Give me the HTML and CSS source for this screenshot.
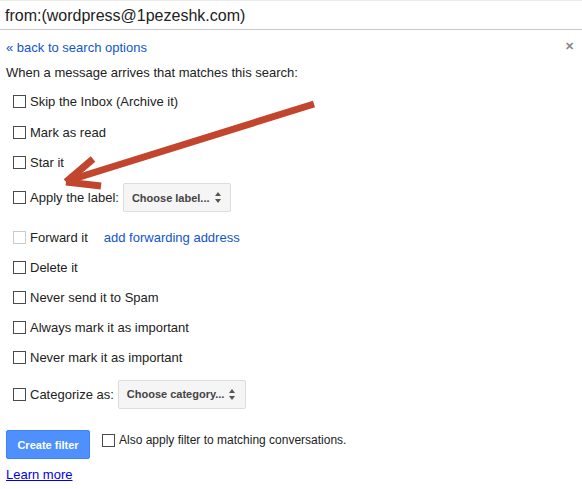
FILE: index.html
```html
<!DOCTYPE html>
<html lang="en">
<head>
  <meta charset="UTF-8" />
  <title>Create filter</title>
  <link rel="stylesheet" href="styles.css">
</head>
<body>

  <div class="search-bar">from:(wordpress@1pezeshk.com)</div>

  <section class="filter-panel">
    <div class="panel-top">
      <a href="#" class="back-link">&laquo; back to search options</a>
      <span class="close">&#x2715;</span>
    </div>

    <p class="intro">When a message arrives that matches this search:</p>

    <div class="options">
      <label class="row"><span class="box"></span>Skip the Inbox (Archive it)</label>
      <label class="row row-read"><span class="box"></span>Mark as read</label>
      <label class="row"><span class="box"></span>Star it</label>
      <label class="row row-select">
        <span class="box"></span>Apply the label:
        <span class="select select-label">Choose label...<span class="updown"></span></span>
      </label>
      <label class="row row-forward">
        <span class="box box-disabled"></span>Forward it
        <a href="#" class="forward-link">add forwarding address</a>
      </label>
      <label class="row"><span class="box"></span>Delete it</label>
      <label class="row"><span class="box"></span>Never send it to Spam</label>
      <label class="row"><span class="box"></span>Always mark it as important</label>
      <label class="row"><span class="box"></span>Never mark it as important</label>
      <label class="row row-cat">
        <span class="box"></span>Categorize as:
        <span class="select select-cat">Choose category...<span class="updown"></span></span>
      </label>
    </div>

    <div class="actions">
      <button class="create-btn">Create filter</button>
      <label class="also"><span class="box"></span>Also apply filter to matching conversations.</label>
    </div>

    <a href="#" class="learn-more">Learn more</a>

    <svg class="arrow" width="582" height="489" viewBox="0 0 582 489">
      <g stroke="#c2452d" stroke-width="7" stroke-linecap="butt" fill="none">
        <line x1="314" y1="104" x2="70" y2="180" />
        <line x1="66" y1="182" x2="93" y2="159" />
        <line x1="66" y1="182" x2="101" y2="186" />
      </g>
    </svg>
  </section>

</body>
</html>
```

FILE: styles.css
```css
* {
  box-sizing: border-box;
  margin: 0;
  padding: 0;
}

body {
  font-family: Arial, 'Liberation Sans', sans-serif;
  font-size: 13px;
  color: #222;
  background: #fff;
  width: 582px;
  height: 489px;
  overflow: hidden;
  position: relative;
}

.search-bar {
  height: 30px;
  padding: 5px 0 0 5px;
  font-size: 16px;
  line-height: 20px;
  color: #222;
  border-top: 1px solid #ececec;
  border-bottom: 1px solid #c8c8c8;
}

.filter-panel {
  padding: 0 6px;
}

.panel-top {
  display: flex;
  justify-content: space-between;
  align-items: center;
  height: 34px;
  padding-top: 1px;
}

.back-link {
  color: #15c;
  text-decoration: none;
}

.close {
  color: #888;
  font-size: 11px;
  font-weight: bold;
  margin-right: 2px;
  margin-top: -2px;
}

.intro {
  line-height: 16px;
  margin-top: 1px;
  height: 21px;
}

.options {
  display: flex;
  flex-direction: column;
}

.row {
  display: flex;
  align-items: center;
  height: 30px;
  padding-left: 7px;
}

.row-read {
  margin-top: 1px;
}

.box {
  width: 13px;
  height: 13px;
  border: 1px solid #4a4a4a;
  background: #fff;
  margin-right: 4px;
  flex-shrink: 0;
}

.box-disabled {
  border-color: #ccc;
}

.row-select {
  height: 41px;
}

.row-forward {
  margin-top: 4px;
}

.forward-link {
  color: #15c;
  text-decoration: none;
  margin-left: 16px;
}

.row-cat {
  height: 42px;
  margin-top: 1px;
}

.select {
  display: flex;
  align-items: center;
  height: 29px;
  padding: 0 8px 0 8px;
  background: #f5f5f5;
  border: 1px solid #dcdcdc;
  border-radius: 2px;
  font-size: 11px;
  font-weight: bold;
  color: #444;
  margin-left: 4px;
}

.select-label {
  width: 108px;
}

.select-cat {
  width: 128px;
}

.updown {
  position: relative;
  width: 7px;
  height: 11px;
  margin-left: 5px;
}

.updown::before,
.updown::after {
  content: '';
  position: absolute;
  left: 0;
  border-left: 3.5px solid transparent;
  border-right: 3.5px solid transparent;
}

.updown::before {
  top: 0;
  border-bottom: 4px solid #555;
}

.updown::after {
  bottom: 0;
  border-top: 4px solid #555;
}

.actions {
  display: flex;
  align-items: flex-start;
  margin-top: 15px;
}

.create-btn {
  width: 84px;
  height: 29px;
  background: #4d90fe;
  border: 1px solid #3f83f2;
  border-radius: 2px;
  color: #fff;
  font-family: Arial, 'Liberation Sans', sans-serif;
  font-size: 11px;
  font-weight: bold;
}

.also {
  display: flex;
  align-items: center;
  margin-left: 12px;
  margin-top: 3px;
  font-size: 12px;
}

.learn-more {
  display: inline-block;
  margin-top: 8px;
  color: #00e;
  text-decoration: underline;
}

.arrow {
  position: absolute;
  left: 0;
  top: 0;
  pointer-events: none;
}
```
